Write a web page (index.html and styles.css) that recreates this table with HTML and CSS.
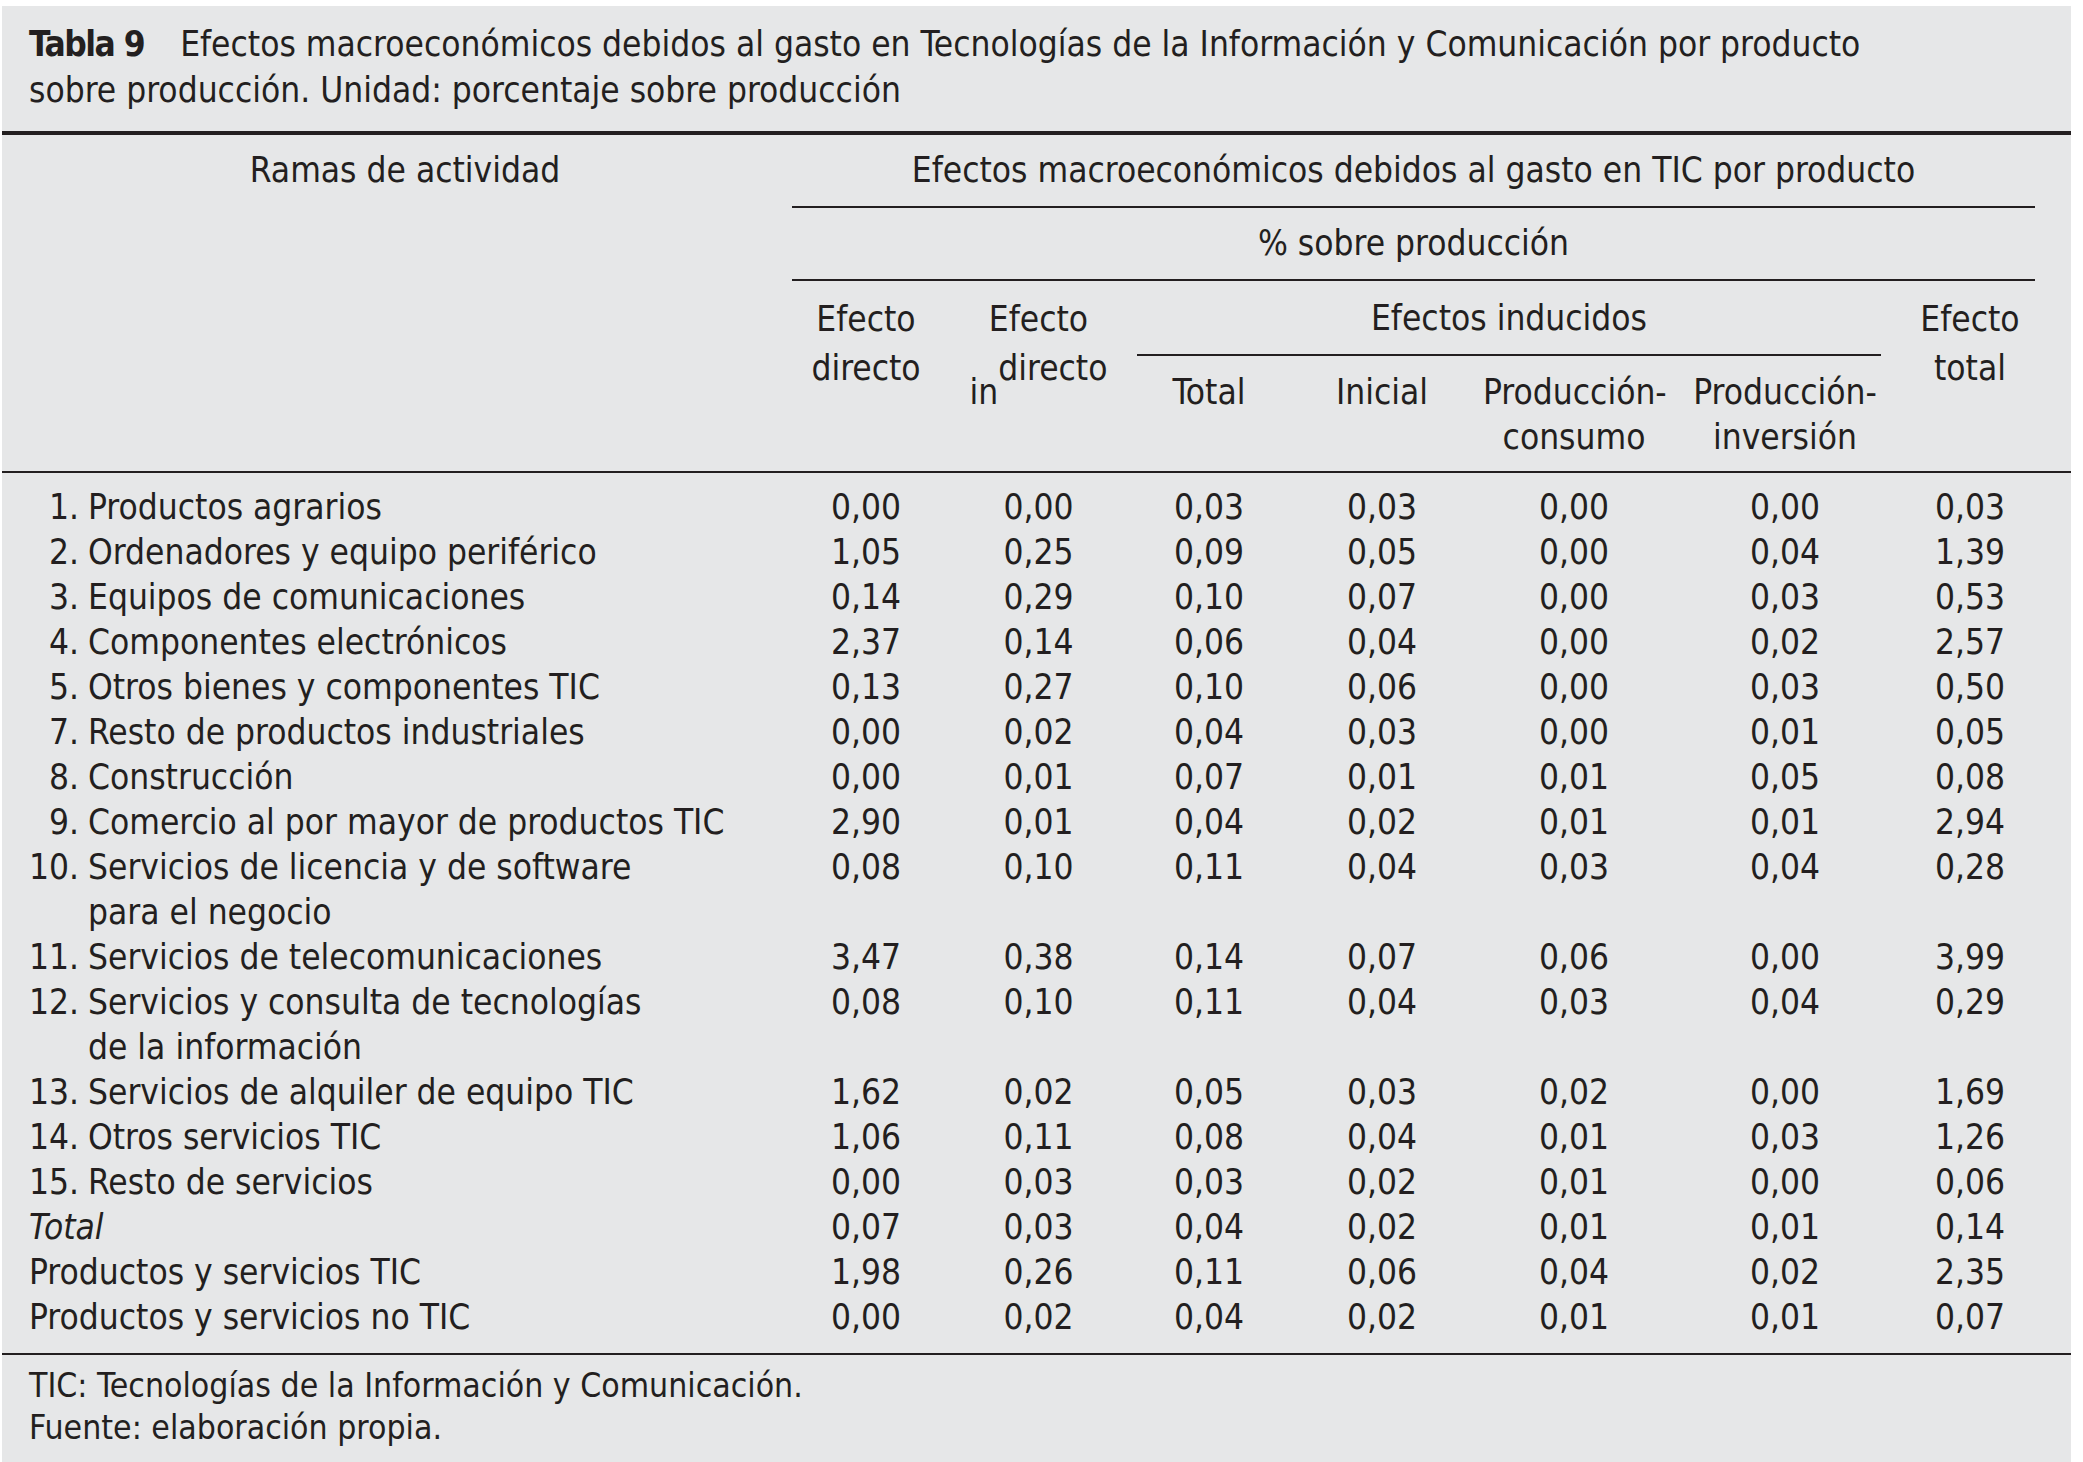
FILE: index.html
```html
<!DOCTYPE html>
<html lang="es">
<head>
<meta charset="utf-8">
<title>Tabla 9</title>
<link rel="stylesheet" href="styles.css">
</head>
<body>
<div class="panel">
  <div class="caption">
    <span class="tag">Tabla 9</span>Efectos macroeconómicos debidos al gasto en Tecnologías de la Información y Comunicación por producto<br>sobre producción. Unidad: porcentaje sobre producción
  </div>
  <div class="rule-thick"></div>

  <div class="head">
    <div class="h-ramas">Ramas de actividad</div>
    <div class="h-macro">Efectos macroeconómicos debidos al gasto en TIC por producto</div>
    <div class="h-rule1"></div>
    <div class="h-pct">% sobre producción</div>
    <div class="h-rule2"></div>
    <div class="h-dir">Efecto<br>directo</div>
    <div class="h-indir">Efecto<br><span class="drop">in</span>directo</div>
    <div class="h-induc">Efectos inducidos</div>
    <div class="h-tot">Efecto<br>total</div>
    <div class="h-rule3"></div>
    <div class="h-sub c4">Total</div>
    <div class="h-sub c5">Inicial</div>
    <div class="h-sub c6">Producción-<br>consumo</div>
    <div class="h-sub c7">Producción-<br>inversión</div>
  </div>
  <div class="rule-thin"></div>

  <div class="body">
    <div class="row"><div class="lab"><span class="num">1.</span><span class="txt">Productos agrarios</span></div><div>0,00</div><div>0,00</div><div>0,03</div><div>0,03</div><div>0,00</div><div>0,00</div><div>0,03</div></div>
    <div class="row"><div class="lab"><span class="num">2.</span><span class="txt">Ordenadores y equipo periférico</span></div><div>1,05</div><div>0,25</div><div>0,09</div><div>0,05</div><div>0,00</div><div>0,04</div><div>1,39</div></div>
    <div class="row"><div class="lab"><span class="num">3.</span><span class="txt">Equipos de comunicaciones</span></div><div>0,14</div><div>0,29</div><div>0,10</div><div>0,07</div><div>0,00</div><div>0,03</div><div>0,53</div></div>
    <div class="row"><div class="lab"><span class="num">4.</span><span class="txt">Componentes electrónicos</span></div><div>2,37</div><div>0,14</div><div>0,06</div><div>0,04</div><div>0,00</div><div>0,02</div><div>2,57</div></div>
    <div class="row"><div class="lab"><span class="num">5.</span><span class="txt">Otros bienes y componentes TIC</span></div><div>0,13</div><div>0,27</div><div>0,10</div><div>0,06</div><div>0,00</div><div>0,03</div><div>0,50</div></div>
    <div class="row"><div class="lab"><span class="num">7.</span><span class="txt">Resto de productos industriales</span></div><div>0,00</div><div>0,02</div><div>0,04</div><div>0,03</div><div>0,00</div><div>0,01</div><div>0,05</div></div>
    <div class="row"><div class="lab"><span class="num">8.</span><span class="txt">Construcción</span></div><div>0,00</div><div>0,01</div><div>0,07</div><div>0,01</div><div>0,01</div><div>0,05</div><div>0,08</div></div>
    <div class="row"><div class="lab"><span class="num">9.</span><span class="txt">Comercio al por mayor de productos TIC</span></div><div>2,90</div><div>0,01</div><div>0,04</div><div>0,02</div><div>0,01</div><div>0,01</div><div>2,94</div></div>
    <div class="row"><div class="lab"><span class="num">10.</span><span class="txt">Servicios de licencia y de software<br>para el negocio</span></div><div>0,08</div><div>0,10</div><div>0,11</div><div>0,04</div><div>0,03</div><div>0,04</div><div>0,28</div></div>
    <div class="row"><div class="lab"><span class="num">11.</span><span class="txt">Servicios de telecomunicaciones</span></div><div>3,47</div><div>0,38</div><div>0,14</div><div>0,07</div><div>0,06</div><div>0,00</div><div>3,99</div></div>
    <div class="row"><div class="lab"><span class="num">12.</span><span class="txt">Servicios y consulta de tecnologías<br>de la información</span></div><div>0,08</div><div>0,10</div><div>0,11</div><div>0,04</div><div>0,03</div><div>0,04</div><div>0,29</div></div>
    <div class="row"><div class="lab"><span class="num">13.</span><span class="txt">Servicios de alquiler de equipo TIC</span></div><div>1,62</div><div>0,02</div><div>0,05</div><div>0,03</div><div>0,02</div><div>0,00</div><div>1,69</div></div>
    <div class="row"><div class="lab"><span class="num">14.</span><span class="txt">Otros servicios TIC</span></div><div>1,06</div><div>0,11</div><div>0,08</div><div>0,04</div><div>0,01</div><div>0,03</div><div>1,26</div></div>
    <div class="row"><div class="lab"><span class="num">15.</span><span class="txt">Resto de servicios</span></div><div>0,00</div><div>0,03</div><div>0,03</div><div>0,02</div><div>0,01</div><div>0,00</div><div>0,06</div></div>
    <div class="row"><div class="lab"><em>Total</em></div><div>0,07</div><div>0,03</div><div>0,04</div><div>0,02</div><div>0,01</div><div>0,01</div><div>0,14</div></div>
    <div class="row"><div class="lab">Productos y servicios TIC</div><div>1,98</div><div>0,26</div><div>0,11</div><div>0,06</div><div>0,04</div><div>0,02</div><div>2,35</div></div>
    <div class="row"><div class="lab">Productos y servicios no TIC</div><div>0,00</div><div>0,02</div><div>0,04</div><div>0,02</div><div>0,01</div><div>0,01</div><div>0,07</div></div>
  </div>
  <div class="rule-thin"></div>

  <div class="notes">
    TIC: Tecnologías de la Información y Comunicación.<br>
    Fuente: elaboración propia.
  </div>
</div>
</body>
</html>
```

FILE: styles.css
```css
html, body {
  margin: 0;
  padding: 0;
  background: #ffffff;
}

body {
  font-family: "DejaVu Sans Condensed", "DejaVu Sans", sans-serif;
  font-stretch: condensed;
  font-size: 35px;
  color: #231f20;
}

.panel {
  margin: 6px 0 0 2px;
  width: 2069px;
  height: 1456px;
  background: #e6e7e8;
  box-sizing: border-box;
}

.caption {
  padding: 15px 0 0 27px;
  line-height: 46px;
  margin-bottom: 18px;
  white-space: nowrap;
}

.tag {
  font-weight: bold;
  display: inline-block;
  letter-spacing: -1.5px;
  margin-right: 36px;
}

.rule-thick {
  height: 4px;
  background: #231f20;
}

.rule-thin {
  height: 2px;
  background: #231f20;
}

.head,
.row {
  display: grid;
  grid-template-columns: 790px 148px 197px 144px 202px 182px 240px 130px 36px;
}

.head {
  grid-template-rows: 71px 2px 71px 2px 73px 2px 115px;
  line-height: 45px;
  text-align: center;
}

.h-ramas {
  grid-column: 1;
  grid-row: 1;
  align-self: center;
  padding-left: 16px;
}

.h-macro {
  grid-column: 2 / 9;
  grid-row: 1;
  align-self: center;
}

.h-rule1 {
  grid-column: 2 / 9;
  grid-row: 2;
  background: #231f20;
}

.h-pct {
  grid-column: 2 / 9;
  grid-row: 3;
  align-self: center;
}

.h-rule2 {
  grid-column: 2 / 9;
  grid-row: 4;
  background: #231f20;
}

.h-dir,
.h-indir,
.h-tot {
  grid-row: 5 / 8;
  padding-top: 14px;
  line-height: 49px;
}

.h-dir { grid-column: 2; }
.h-indir { grid-column: 3; }
.h-tot { grid-column: 8; }

.drop {
  vertical-align: -24px;
  line-height: 1;
}

.h-induc {
  grid-column: 4 / 8;
  grid-row: 5;
  padding-top: 15px;
  margin-right: 24px;
}

.h-rule3 {
  grid-column: 4 / 8;
  grid-row: 6;
  margin-right: 24px;
  background: #231f20;
}

.h-sub {
  grid-row: 7;
  padding-top: 14px;
}

.c4 { grid-column: 4; }
.c5 { grid-column: 5; }
.c6 { grid-column: 6; }
.c7 { grid-column: 7; }

.body {
  padding: 12px 0 13px 0;
  line-height: 45px;
}

.row {
  align-items: start;
  text-align: center;
}

.lab {
  display: flex;
  align-items: flex-start;
  text-align: left;
  padding-left: 27px;
}

.num {
  width: 50px;
  text-align: right;
  flex: none;
}

.txt {
  margin-left: 9px;
}

.lab em {
  font-style: italic;
}

.notes {
  padding: 10px 0 0 27px;
  font-size: 33.5px;
  line-height: 42px;
}
```
